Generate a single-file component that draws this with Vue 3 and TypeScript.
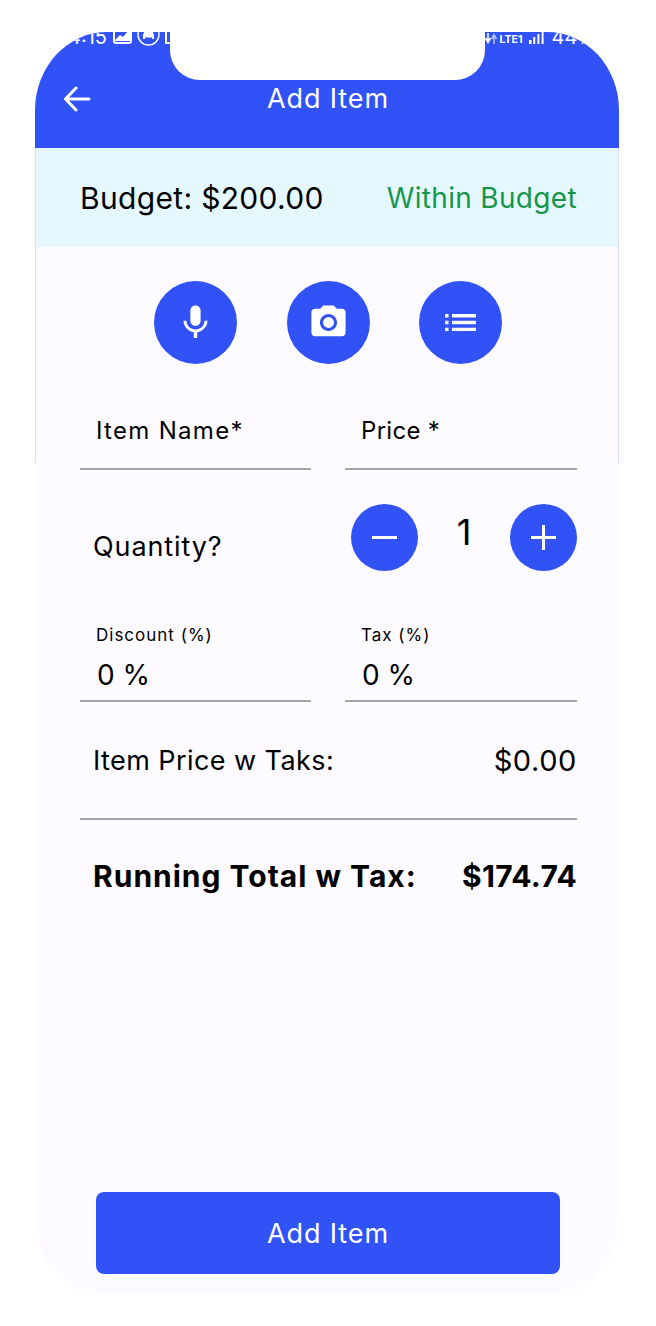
<script setup lang="ts">
import { ref } from 'vue'

const quantity = ref(1)
const budget = '$200.00'
const itemPrice = '$0.00'
const runningTotal = '$174.74'
</script>

<template>
  <div class="page">
    <div class="phone">
      <header class="header">
        <div class="status">
          <div class="statusLeft">
            <span class="time">4:15</span>
            <svg class="statusIcon" width="19" height="19" viewBox="0 0 19 19">
              <rect x="1" y="1" width="17" height="17" rx="2" fill="none" stroke="#fff" stroke-width="2" />
              <path d="M2 15l5-5 3 2 5-6 2 1v9H2z" fill="#fff" />
            </svg>
            <svg class="statusIcon car" width="23" height="23" viewBox="0 0 23 23">
              <circle cx="11.5" cy="11.5" r="10.5" fill="none" stroke="#fff" stroke-width="1.4" />
              <path d="M6 12l1.500-4h8l1.500 4v4h-2v-1.500H8V16H6z" fill="#fff" />
            </svg>
            <svg class="statusIcon" width="7" height="14" viewBox="0 0 7 14">
              <rect x="1" y="1" width="12" height="12" fill="none" stroke="#fff" stroke-width="2" />
            </svg>
          </div>
          <div class="statusRight">
            <svg class="statusIcon" width="12" height="11" viewBox="0 0 12 11">
              <path d="M3 0v8M0.500 5L3 9.500 5.500 5" fill="none" stroke="#fff" stroke-width="1.600" />
              <path d="M9 11V3M6.500 6L9 1.500 11.500 6" fill="none" stroke="#aebcff" stroke-width="1.600" />
            </svg>
            <span class="lte">LTE1</span>
            <svg class="statusIcon" width="15" height="12" viewBox="0 0 15 12">
              <path d="M0 8h2.500v4H0zM4.200 5h2v7h-2zM8.400 2h2v10h-2zM12.600 0h2v12h-2z" fill="#fff" />
            </svg>
            <span class="battery">44%</span>
          </div>
        </div>
        <div class="titleBar">
          <svg class="back" width="28" height="26" viewBox="0 0 28 26">
            <path d="M26 13H3M13 2L2.500 13 13 24" fill="none" stroke="#fff" stroke-width="3" stroke-linecap="round" stroke-linejoin="round" />
          </svg>
          <h1 class="title">Add Item</h1>
        </div>
      </header>

      <section class="budget">
        <span class="budgetAmount">Budget: {{ budget }}</span>
        <span class="budgetState">Within Budget</span>
      </section>

      <main class="form">
        <div class="actions">
          <button class="roundBtn" type="button">
            <svg width="41" height="41" viewBox="0 0 24 24">
              <path fill="#fff" d="M12 14c1.660 0 2.990-1.340 2.990-3L15 5c0-1.660-1.340-3-3-3S9 3.340 9 5v6c0 1.660 1.340 3 3 3zm5.300-3c0 3-2.540 5.100-5.300 5.100S6.700 14 6.700 11H5c0 3.410 2.720 6.230 6 6.720V21h2v-3.280c3.280-.48 6-3.300 6-6.720h-1.700z" />
            </svg>
          </button>
          <button class="roundBtn" type="button">
            <svg width="41" height="41" viewBox="0 0 24 24">
              <circle cx="12" cy="12" r="3.200" fill="#fff" />
              <path fill="#fff" d="M9 2L7.170 4H4c-1.100 0-2 .9-2 2v12c0 1.100.9 2 2 2h16c1.100 0 2-.9 2-2V6c0-1.100-.9-2-2-2h-3.170L15 2H9zm3 15c-2.760 0-5-2.240-5-5s2.240-5 5-5 5 2.240 5 5-2.240 5-5 5z" />
            </svg>
          </button>
          <button class="roundBtn" type="button">
            <svg width="41" height="41" viewBox="0 0 24 24">
              <path fill="#fff" d="M3 13h2v-2H3v2zm0 4h2v-2H3v2zm0-8h2V7H3v2zm4 4h14v-2H7v2zm0 4h14v-2H7v2zM7 7v2h14V7H7z" />
            </svg>
          </button>
        </div>

        <div class="fieldRow first">
          <div class="field plain">Item Name*</div>
          <div class="field plain price">Price *</div>
        </div>

        <div class="quantityRow">
          <span class="quantityLabel">Quantity?</span>
          <div class="stepper">
            <button class="stepBtn" type="button">
              <svg width="25" height="25" viewBox="0 0 25 25">
                <path d="M0 12.500h25" stroke="#fff" stroke-width="3" />
              </svg>
            </button>
            <span class="quantityValue">{{ quantity }}</span>
            <button class="stepBtn" type="button">
              <svg width="25" height="25" viewBox="0 0 25 25">
                <path d="M0 12.500h25M12.500 0v25" stroke="#fff" stroke-width="3" />
              </svg>
            </button>
          </div>
        </div>

        <div class="fieldRow second">
          <div class="field filled">
            <span class="fieldLabel">Discount (%)</span>
            <span class="fieldValue">0 %</span>
          </div>
          <div class="field filled">
            <span class="fieldLabel">Tax (%)</span>
            <span class="fieldValue">0 %</span>
          </div>
        </div>

        <div class="summary itemPrice">
          <span>Item Price w Taks:</span>
          <span class="amount">{{ itemPrice }}</span>
        </div>

        <div class="summary total">
          <span>Running Total w Tax:</span>
          <span class="totalAmount">{{ runningTotal }}</span>
        </div>

        <button class="submit" type="button">Add Item</button>
      </main>

      <div class="notch"></div>
      <div class="sideLines"></div>
    </div>
  </div>
</template>

<style>
html,
body {
  background: #fff;
}
</style>

<style scoped>
.page {
  width: 656px;
  height: 1326px;
  box-sizing: border-box;
  padding: 32px 0 32px 35px;
  font-family: Inter, "Open Sans", sans-serif;
  color: #000;
}
.phone {
  position: relative;
  width: 584px;
  height: 1262px;
  display: flex;
  flex-direction: column;
  overflow: hidden;
  background: #fdfbff;
  border-radius: 72px 72px 62px 62px / 78px 78px 78px 78px;
}
.header {
  height: 116px;
  flex: none;
  background: #3152f6;
  color: #fff;
}
.status {
  display: flex;
  justify-content: space-between;
  height: 14px;
  padding: 0 22px 0 33px;
}
.statusLeft,
.statusRight {
  display: flex;
  align-items: flex-end;
  height: 12px;
}
.statusLeft {
  gap: 5px;
}
.statusRight {
  gap: 3px;
}
.statusIcon {
  flex: none;
}
.car {
  margin-bottom: -2px;
}
.time {
  font-size: 20px;
  line-height: 14px;
  margin-right: 1px;
}
.lte {
  font-size: 10.5px;
  line-height: 9px;
  font-weight: 700;
  margin-right: 3px;
}
.battery {
  font-size: 20px;
  line-height: 14px;
  margin-left: 5px;
}
.titleBar {
  display: flex;
  align-items: center;
  justify-content: center;
  position: relative;
  height: 26px;
  margin-top: 39px;
}
.back {
  position: absolute;
  left: 28px;
  top: 1px;
}
.title {
  margin: 0;
  padding-left: 2px;
  font-size: 27px;
  font-weight: 400;
  letter-spacing: 0.9px;
}
.budget {
  height: 99px;
  flex: none;
  display: flex;
  align-items: center;
  justify-content: space-between;
  padding: 0 42px 0 45px;
  background: #e5f8ff;
  font-size: 30px;
  letter-spacing: 0.33px;
}
.budgetState {
  color: #16964a;
  font-size: 28px;
}
.form {
  flex: 1;
  display: flex;
  flex-direction: column;
  padding: 0 42px 0 45px;
}
.actions {
  display: flex;
  justify-content: center;
  gap: 49.5px;
  margin-top: 34px;
  padding-right: 1px;
}
.roundBtn,
.stepBtn {
  display: flex;
  align-items: center;
  justify-content: center;
  padding: 0;
  border: none;
  border-radius: 50%;
  background: #3152f6;
}
.roundBtn {
  width: 83px;
  height: 83px;
}
.stepBtn {
  width: 67px;
  height: 67px;
}
.fieldRow {
  display: grid;
  grid-template-columns: 231px 232px;
  gap: 34px;
}
.fieldRow.first {
  margin-top: 26px;
}
.fieldRow.second {
  margin-top: 49px;
}
.field {
  box-sizing: border-box;
  border-bottom: 2px solid #a5a3a8;
}
.field.plain {
  height: 80px;
  display: flex;
  align-items: center;
  padding: 2px 0 0 16px;
  font-size: 24px;
  letter-spacing: 1.3px;
}
.field.price {
  letter-spacing: 0.3px;
}
.field.filled {
  height: 82px;
  display: flex;
  flex-direction: column;
}
.fieldLabel {
  height: 30px;
  line-height: 30px;
  padding-left: 16px;
  font-size: 17px;
  letter-spacing: 1px;
}
.fieldValue {
  height: 50px;
  line-height: 50px;
  padding-left: 17px;
  font-size: 28px;
}
.quantityRow {
  display: flex;
  justify-content: space-between;
  margin-top: 34px;
}
.quantityLabel {
  padding: 18px 0 0 13px;
  height: 49px;
  font-size: 27px;
  line-height: 49px;
  letter-spacing: 0.9px;
}
.stepper {
  width: 226px;
  display: flex;
  align-items: center;
  justify-content: space-between;
}
.quantityValue {
  font-size: 36px;
  padding-bottom: 12px;
}
.summary {
  display: flex;
  align-items: center;
  justify-content: space-between;
  padding-left: 13px;
}
.itemPrice {
  height: 118px;
  box-sizing: border-box;
  border-bottom: 2px solid #a5a3a8;
  font-size: 27px;
  letter-spacing: 0.43px;
}
.amount {
  font-size: 29px;
  letter-spacing: 0.6px;
}
.total {
  height: 112px;
  font-size: 30px;
  font-weight: 700;
  letter-spacing: 1px;
}
.totalAmount {
  letter-spacing: 0.3px;
}
.submit {
  width: 464px;
  height: 82px;
  margin: auto 0 20px 16px;
  border: none;
  border-radius: 8px;
  background: #3152f6;
  color: #fff;
  font-family: inherit;
  font-size: 27px;
  letter-spacing: 0.9px;
}
.notch {
  position: absolute;
  top: -1px;
  left: 135px;
  width: 315px;
  height: 49px;
  background: #fff;
  border-radius: 0 0 30px 30px;
}
/* hairline down the sides of the top part of the screen */
.sideLines {
  position: absolute;
  top: 116px;
  left: 0;
  right: 0;
  height: 315px;
  box-sizing: border-box;
  border-left: 1px solid #d5e0ff;
  border-right: 1px solid #d5e0ff;
  pointer-events: none;
}
</style>
